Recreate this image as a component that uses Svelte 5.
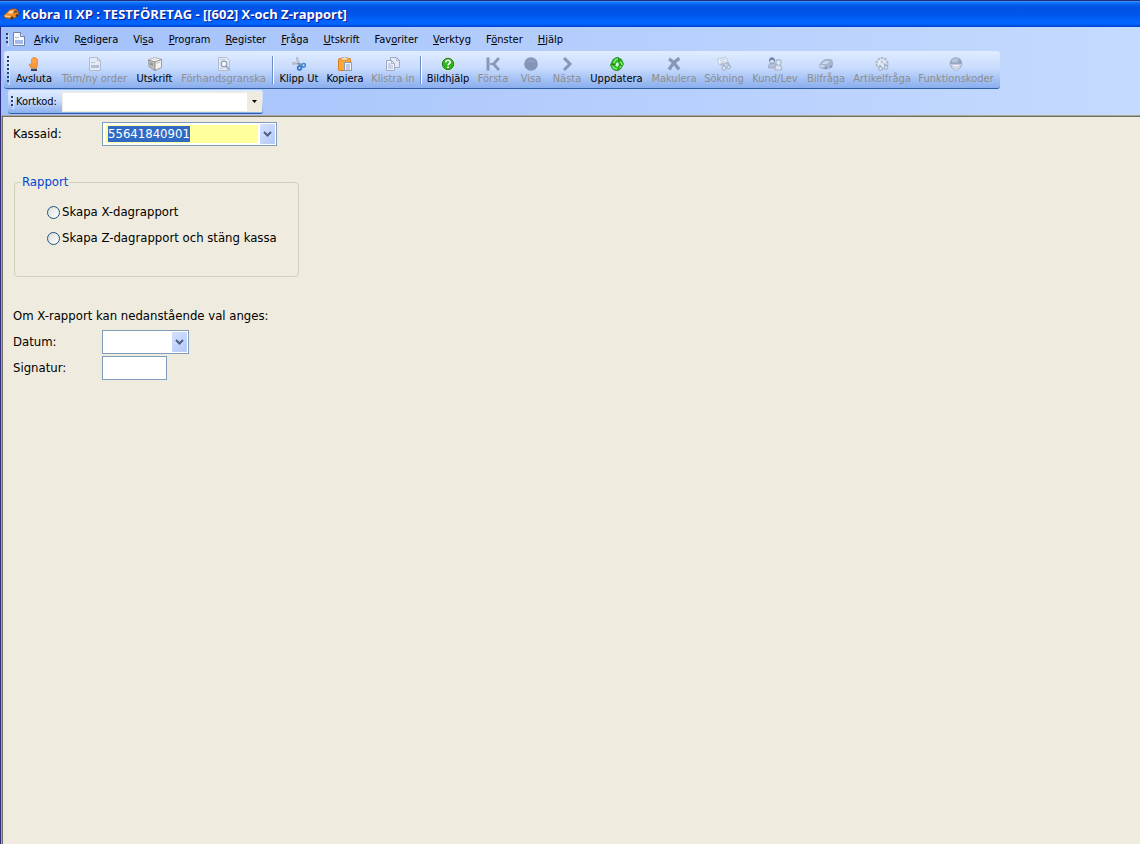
<script lang="ts">
  import { onMount } from "svelte";

  // [before, access key, after]
  const menus = [
    ["", "A", "rkiv"],
    ["R", "e", "digera"],
    ["Vi", "s", "a"],
    ["", "P", "rogram"],
    ["", "R", "egister"],
    ["", "F", "råga"],
    ["", "U", "tskrift"],
    ["Fav", "o", "riter"],
    ["", "V", "erktyg"],
    ["F", "ö", "nster"],
    ["", "H", "jälp"],
  ];

  const groups = [
    [
      { label: "Avsluta", icon: "hand", w: 46, on: true },
      { label: "Töm/ny order", icon: "page", w: 75 },
      { label: "Utskrift", icon: "box", w: 45, on: true },
      { label: "Förhandsgranska", icon: "preview", w: 93 },
    ],
    [
      { label: "Klipp Ut", icon: "cut", w: 46, on: true },
      { label: "Kopiera", icon: "paste", w: 46, on: true },
      { label: "Klistra in", icon: "copy", w: 50 },
    ],
    [
      { label: "Bildhjälp", icon: "help", w: 48, on: true },
      { label: "Första", icon: "first", w: 42 },
      { label: "Visa", icon: "dot", w: 34 },
      { label: "Nästa", icon: "next", w: 38 },
      { label: "Uppdatera", icon: "refresh", w: 61, on: true },
      { label: "Makulera", icon: "cross", w: 54 },
      { label: "Sökning", icon: "search", w: 46 },
      { label: "Kund/Lev", icon: "people", w: 56 },
      { label: "Bilfråga", icon: "car", w: 46 },
      { label: "Artikelfråga", icon: "gear", w: 66 },
      { label: "Funktionskoder", icon: "globe", w: 82 },
    ],
  ];

  let kassaid = $state("55641840901");
  let datum = $state("");
  let signatur = $state("");
  let kortkod = $state("");
  let rapport = $state("");
  let kassaInput: HTMLInputElement;

  onMount(() => {
    kassaInput.focus();
    kassaInput.select();
  });
</script>

{#snippet arrow()}
  <svg viewBox="0 0 9 6" width="9" height="6"><path d="M1 1l3.500 3.500L8 1" fill="none" stroke="#4d6185" stroke-width="2" /></svg>
{/snippet}

{#snippet icon(name)}
  <svg class="icon" viewBox="1 1 14 14" width="14" height="14" aria-hidden="true">
    {#if name === "hand"}
      <path d="M5 12L3 8.500l1-.8 1.500 1.300V3l1-.6.8.6V1.500l1.200-.5 1 .7v1l1.300-.2.7 1V9l-1 3z" fill="#fb9a3c" stroke="#e27a1c" stroke-width=".6" />
      <path d="M7.300 3v4M9.400 3v4" stroke="#ffc382" stroke-width=".6" />
      <path d="M5 12h6v3H5z" fill="#3f4148" /><path d="M5 12h6v1H5z" fill="#fff" opacity=".5" />
    {:else if name === "page"}
      <path d="M2.500 1.500h8l3 3v10h-11z" fill="#e3e9f5" stroke="#b2bcd1" />
      <path d="M10.500 1.500v3h3" fill="none" stroke="#b2bcd1" />
      <path d="M4 6h4v1H4zM4 9h8v3H4z" fill="#b3bfd6" />
    {:else if name === "box"}
      <path d="M1.500 4l6-2.500 7 2-6.500 2.500z" fill="#fff" stroke="#9a9a9a" stroke-width=".8" />
      <path d="M1.500 4l6.500 2v8.500l-6-4z" fill="#c4c4c2" stroke="#858585" stroke-width=".8" />
      <path d="M8 6l6.500-2.500v8L8 14.500z" fill="#f1f1ee" stroke="#858585" stroke-width=".8" />
      <path d="M5 2.500l6 2" stroke="#c9c9c9" /><path d="M3 6l3 1.200v3L3 9z" fill="#77797c" opacity=".6" />
      <path d="M9.500 7.500l3.500-1.500" stroke="#bfbfbc" />
    {:else if name === "preview"}
      <path d="M2.500 1.500h8l3 3v10h-11z" fill="#e3e9f5" stroke="#b2bcd1" />
      <path d="M4 3.500h5M4 12.500h3" stroke="#c3cbdd" />
      <circle cx="8" cy="8" r="2.800" fill="#f4f7fc" stroke="#93a1bd" stroke-width="1.300" />
      <path d="M10 10l3 3.500" stroke="#93a1bd" stroke-width="1.800" />
    {:else if name === "cut"}
      <path d="M6 1l1 6.500 2.500 2M1 7.500l6-.5 4 2" fill="none" stroke="#8b929c" stroke-width="1.800" />
      <path d="M6 1l.8 6M1.500 7.300l5-.4" stroke="#e9edf2" stroke-width=".8" />
      <circle cx="8.500" cy="12" r="1.900" fill="none" stroke="#2b75cc" stroke-width="1.600" />
      <circle cx="12.600" cy="9.300" r="1.800" fill="none" stroke="#3f8ae0" stroke-width="1.600" />
    {:else if name === "paste"}
      <rect x="1.500" y="2.500" width="12" height="12" rx="1" fill="#fba83a" stroke="#d97b12" />
      <path d="M4 4V2h2V1h3v1h2v2z" fill="#fbe9c8" stroke="#a88450" stroke-width=".6" />
      <path d="M7.500 6.500h7v8h-7z" fill="#f1f4fb" stroke="#8292b4" stroke-width=".9" />
      <path d="M9 9h4M9 11h4M9 13h4" stroke="#8da4d2" />
    {:else if name === "copy"}
      <path d="M5.500 1.500h6l3 3v7h-9z" fill="#e3e9f5" stroke="#9eaac4" />
      <path d="M1.500 4.500h5l3 3v7h-8z" fill="#edf1f9" stroke="#9eaac4" />
      <path d="M11.500 1.500v3h3M6.500 4.500v3h3M3 8h3M3 10h5M3 12h5" fill="none" stroke="#a9b6d0" />
    {:else if name === "help"}
      <circle cx="8" cy="8" r="6.400" fill="#2fb41f" stroke="#dcecd8" stroke-width="1.200" />
      <circle cx="8" cy="8" r="5.700" fill="none" stroke="#27802a" />
      <path d="M5.800 6.500c0-3 4.500-2.800 4.500-.3 0 1.500-2.200 1.500-2.200 3" fill="none" stroke="#fff" stroke-width="1.600" />
      <path d="M7.200 10.500H9V12H7.200z" fill="#fff" />
    {:else if name === "first"}
      <path d="M1.500 1.500h3v13h-3z" fill="#8797b8" /><path d="M14 2L8.500 8l5.500 6" fill="none" stroke="#8797b8" stroke-width="2.800" />
      <path d="M5 8h4" stroke="#8797b8" stroke-width="2" />
    {:else if name === "dot"}
      <circle cx="8" cy="8" r="6.800" fill="#8595b7" /><path d="M3 6.500a5.400 5.400 0 0 1 10 0z" fill="#8f9ebe" />
    {:else if name === "next"}
      <path d="M5 2l6 6-6 6" fill="none" stroke="#8797b8" stroke-width="3" />
    {:else if name === "refresh"}
      <path d="M4 3.500L8 1l4.500 2.500L14.500 8l-3 5L8 15l-4.500-2L1.500 9z" fill="#2cb323" stroke="#1d8a17" stroke-width=".8" />
      <path d="M4.500 7L7 3.500 9.500 3M11.500 5.500l1.500 3-2 3M8 12.800l-3-.6-1.500-2.400" fill="none" stroke="#7df072" stroke-width="1.500" />
      <path d="M8 6l2 2-1.500 3L6 9.500z" fill="#e6f5e8" /><path d="M9.500 1.800l.5 3.400M13.500 10l-3.500-1.500M3 8l3.500 1" stroke="#17780f" />
    {:else if name === "cross"}
      <path d="M3 3c4 2 6 5 10 10.500M13.500 2.500C9 4.500 6 9 3 13.500" fill="none" stroke="#8797b8" stroke-width="3.400" />
    {:else if name === "search"}
      <path d="M1.500 3l8.500-1.500 2 5-9 2z" fill="#f0f3f9" stroke="#b2bdd3" stroke-width=".8" />
      <path d="M4 4.500l5-1M4.500 6.500l5-1" stroke="#b2bdd3" stroke-width=".8" />
      <path d="M4.500 9l3-1 1 3M9.500 7.500l2.500-.5 2 4" fill="none" stroke="#b0bbd1" stroke-width="2" />
      <circle cx="8" cy="12" r="2.100" fill="#dce4f2" stroke="#9aa8c4" /><circle cx="12.700" cy="11" r="1.800" fill="#dce4f2" stroke="#9aa8c4" />
    {:else if name === "people"}
      <path d="M1.500 12c0-4 1.500-5 4-5S10 8 10 12z" fill="#b2bfd8" stroke="#98a6c3" stroke-width=".8" />
      <circle cx="5" cy="5" r="2.500" fill="#d9e1f0" stroke="#8b9abb" /><path d="M2 5c0-5 6-5 6 0L5 3.800z" fill="#6f81a8" />
      <path d="M8 14c0-4 1-5.500 3.500-5.500s3 2 3 5.500z" fill="#dbe3f1" stroke="#98a6c3" stroke-width=".8" />
      <path d="M9 4h5v4l-2.500 1.500L9 8z" fill="#dfe6f3" stroke="#98a6c3" stroke-width=".9" />
    {:else if name === "car"}
      <path d="M1.300 9.500L4 5.500Q6 3.500 9 3.500h3.500q2 .5 2 2.500v4l-2.500 2-6 .8-4-1.300z" fill="#a9b6cf" stroke="#9dabc6" stroke-width=".8" />
      <path d="M4 8l2-2.600 5-.6-1.500 2.900z" fill="#d3dced" /><path d="M2 9.800l4.500.5" stroke="#dfe6f3" stroke-width="1.200" />
      <circle cx="8" cy="12" r="1.400" fill="#8797b5" /><circle cx="13" cy="10.500" r="1.200" fill="#8797b5" />
    {:else if name === "gear"}
      <circle cx="8" cy="7.500" r="5.400" fill="#dfe6f2" stroke="#a9b5cd" stroke-width="2.200" stroke-dasharray="2.200 1.200" />
      <circle cx="8" cy="7.500" r="4.800" fill="#e6ecf6" stroke="#b8c3d7" stroke-width=".8" />
      <circle cx="8" cy="6" r="1.400" fill="#b4c2dc" />
      <path d="M5.500 9l1.500 2M10 7.500l2 3" stroke="#98a6c3" stroke-width="1.500" />
      <circle cx="6.500" cy="12.500" r="1.800" fill="#dce4f2" stroke="#98a6c3" /><circle cx="12" cy="11.500" r="1.800" fill="#dce4f2" stroke="#98a6c3" />
    {:else if name === "globe"}
      <circle cx="8" cy="7.500" r="6.200" fill="#97a5c1" /><path d="M3 6a5.500 5.500 0 0 1 8-3L9 6.500z" fill="#b8c4da" />
      <path d="M2 8h12l-2 4-4 3-4-3z" fill="#cfd8e9" stroke="#a3b0c9" stroke-width=".7" />
      <path d="M5.500 9.500h5" stroke="#f2f5fa" />
    {/if}
  </svg>
{/snippet}

<div class="window">
  <header class="titlebar">
    <svg viewBox="0 0 16 16" width="16" height="16">
      <path d="M1 9.500l3-3L6.500 4Q10 2.500 13 3l2 2 .3 4-2.800 2.500-5 1.300-5.500-1z" fill="#f08a24" stroke="#b8560e" stroke-width=".8" />
      <path d="M4.500 7.500l2.400-2.600 4-.6-1.700 3.200z" fill="#fbdcae" /><path d="M10.500 7l1.300-2.800 2 .3.500 2z" fill="#7d4a2b" />
      <path d="M1.800 9.300l5.700.7v1.300l-5.700-.6z" fill="#ffd28e" />
      <circle cx="9" cy="12" r="1.600" fill="#4b3528" /><circle cx="14" cy="9.500" r="1.300" fill="#4b3528" />
    </svg>
    <h1>Kobra II XP : TESTFÖRETAG - [[602] X-och Z-rapport]</h1>
  </header>

  <div class="bars">
    <nav class="menubar">
      <span class="grip"></span>
      <svg class="doc" viewBox="0 0 14 16" width="14" height="16">
        <path d="M1.500 1.500h7l4 4v9h-11z" fill="#f8faff" stroke="#7183ac" />
        <path d="M8.500 1.500v4h4" fill="#cfdcf5" stroke="#7183ac" /><path d="M3 6h4v1H3zM3 9h8v4H3z" fill="#a6bce6" />
      </svg>
      {#each menus as [pre, key, post]}
        <button class="menu">{pre}<u>{key}</u>{post}</button>
      {/each}
    </nav>

    <div class="toolbar">
      <span class="grip"></span>
      {#each groups as group, i}
        {#if i > 0}<span class="sep"></span>{/if}
        {#each group as tool}
          <button class="tool" disabled={!tool.on} style="width: {tool.w}px">
            {@render icon(tool.icon)}
            <span>{tool.label}</span>
          </button>
        {/each}
      {/each}
    </div>

    <div class="codebar">
      <span class="grip"></span>
      <label for="kortkod">Kortkod:</label>
      <div class="code">
        <input id="kortkod" bind:value={kortkod} />
        <button aria-label="Visa kortkoder">
          <svg viewBox="0 0 5 3" width="5" height="3"><path d="M0 0h5L2.500 3z" /></svg>
        </button>
      </div>
    </div>
  </div>

  <main>
    <div class="row">
      <label for="kassaid">Kassaid:</label>
      <div class="combo wide">
        <input id="kassaid" bind:this={kassaInput} bind:value={kassaid} />
        <button aria-label="Välj kassa">{@render arrow()}</button>
      </div>
    </div>

    <fieldset>
      <legend>Rapport</legend>
      <label class="choice"><input type="radio" name="rapport" value="x" bind:group={rapport} />Skapa X-dagrapport</label>
      <label class="choice"><input type="radio" name="rapport" value="z" bind:group={rapport} />Skapa Z-dagrapport och stäng kassa</label>
    </fieldset>

    <p>Om X-rapport kan nedanstående val anges:</p>
    <div class="row">
      <label for="datum">Datum:</label>
      <div class="combo">
        <input id="datum" bind:value={datum} />
        <button aria-label="Välj datum">{@render arrow()}</button>
      </div>
    </div>
    <div class="row">
      <label for="signatur">Signatur:</label>
      <input id="signatur" class="plain" bind:value={signatur} />
    </div>
  </main>
</div>

<style>
  :global(body) {
    margin: 0;
  }

  .window {
    display: flex;
    flex-direction: column;
    box-sizing: border-box;
    min-height: 100vh;
    border-left: 1px solid #2c2c80;
    background: #efebde;
    font: 11px/14px Tahoma, "DejaVu Sans Condensed", "DejaVu Sans", sans-serif;
    color: #000;
  }

  button,
  input {
    font: inherit;
    color: inherit;
    border: 0;
    margin: 0;
    padding: 0;
    background: none;
    outline: none;
    box-sizing: border-box;
  }

  .titlebar {
    display: flex;
    align-items: center;
    gap: 3px;
    height: 26px;
    margin-left: -1px;
    padding-left: 3px;
    border-top: 1px solid #24307c;
    background: linear-gradient(#3d95ff, #0a6cf8 8%, #0053e4 22%, #0054e9 50%, #0163fd 75%, #0166ff 88%, #0040c8);
  }

  h1 {
    margin: 0;
    font: bold 13px/16px "Trebuchet MS", "Open Sans", sans-serif;
    color: #fff;
    text-shadow: 1px 1px #0a1883;
    white-space: nowrap;
  }

  .bars {
    padding: 0 0 1px 1px;
    background: linear-gradient(90deg, #a2c0fa, #c5daff);
  }

  .menubar {
    display: flex;
    align-items: center;
    height: 24px;
    padding-left: 4px;
  }

  .grip {
    flex: none;
    width: 2px;
    height: 12px;
    margin-right: 4px;
    background: repeating-linear-gradient(#27416f 0 2px, transparent 2px 4px);
    box-shadow: 1px 1px #ffffff80;
  }

  .doc {
    margin-right: 1px;
  }

  .menu {
    height: 20px;
    padding: 2px 8px 0 7px;
    white-space: nowrap;
  }

  .toolbar,
  .codebar {
    display: flex;
    align-items: center;
    width: fit-content;
    box-sizing: border-box;
    border-bottom: 1px solid #2f5ea5;
    border-radius: 3px;
    background: linear-gradient(#e0ecff, #c9dcfd 45%, #8aaeee);
  }

  .toolbar {
    height: 38px;
    margin-left: 2px;
    padding: 0 3px;
  }

  .toolbar .grip {
    height: 28px;
    margin-right: 2px;
  }

  .tool {
    flex: none;
    display: flex;
    flex-direction: column;
    align-items: center;
    gap: 1px;
    height: 34px;
    padding-top: 4px;
    white-space: nowrap;
  }

  .tool:disabled {
    color: #8d8d8d;
  }

  .icon {
    flex: none;
  }

  .sep {
    width: 1px;
    height: 28px;
    margin: 0 2px;
    border-right: 1px solid #fff;
    background: #6a8ccb;
  }

  .codebar {
    height: 24px;
    margin: 1px 0 0 6px;
    padding: 0 1px 0 3px;
  }

  .codebar .grip {
    margin-right: 3px;
  }

  .codebar label {
    width: 46px;
    white-space: nowrap;
  }

  .code {
    display: flex;
    width: 200px;
    height: 20px;
    box-sizing: border-box;
    border: 1px solid #efebde;
    background: #fff;
  }

  .code input {
    flex: 1;
    min-width: 0;
    padding: 0 4px;
  }

  .code button {
    display: flex;
    align-items: center;
    justify-content: center;
    width: 14px;
    background: #efebde;
  }

  main {
    flex: 1;
    padding: 4px 10px;
    border-top: 1px solid #aca899;
    border-left: 1px solid #aca899;
    box-shadow: inset 1px 1px #716f64;
    padding: 5px 11px;
    font-size: 13px;
    line-height: 16px;
  }

  .row {
    display: flex;
    align-items: center;
    height: 26px;
  }

  .row > label {
    width: 89px;
  }

  .combo,
  .plain {
    box-sizing: border-box;
    height: 24px;
    border: 1px solid #7f9db9;
    background: #fff;
  }

  .combo {
    display: flex;
    width: 87px;
    padding: 1px;
  }

  .combo.wide {
    width: 175px;
  }

  .combo input {
    flex: 1;
    min-width: 0;
    margin: 1px 2px 1px 1px;
    padding: 0 3px;
  }

  .wide input {
    background: #ffff9c;
  }

  input::selection {
    background: #316ac5;
    color: #fff;
  }

  .combo button {
    display: flex;
    align-items: center;
    justify-content: center;
    width: 15px;
    border-radius: 1px;
    background: linear-gradient(135deg, #d5e1fd, #b3c9f8);
  }

  .plain {
    width: 65px;
    padding: 0 4px;
  }

  fieldset {
    box-sizing: border-box;
    width: 285px;
    height: 103px;
    margin: 27px 0 31px 1px;
    padding: 9px 0 0 32px;
    border: 1px solid #d0d0bf;
    border-radius: 4px;
  }

  legend {
    margin-left: -26px;
    padding: 0 1px;
    color: #0046d5;
  }

  .choice {
    display: flex;
    align-items: center;
    gap: 2px;
    height: 26px;
    white-space: nowrap;
  }

  .choice input {
    appearance: none;
    width: 13px;
    height: 13px;
    border: 1px solid #1d5281;
    border-radius: 50%;
    background: linear-gradient(135deg, #dcdcd7, #fff);
  }

  .choice input:checked {
    background: radial-gradient(#2ba52b 0 2px, #fff 3px);
  }

  p {
    margin: 0 0 5px;
  }
</style>
